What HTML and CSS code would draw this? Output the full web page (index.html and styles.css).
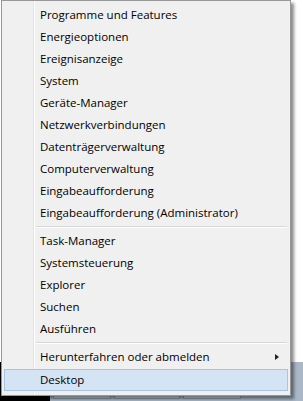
FILE: index.html
```html
<!DOCTYPE html>
<html lang="de">
<head>
    <meta charset="UTF-8">
    <title>Kontextmenü</title>
    <link rel="stylesheet" href="styles.css">
</head>
<body>
    <div class="taskbar">
        <div class="start"></div>
        <div class="task-btn"></div>
        <div class="task-btn wide"></div>
        <div class="task-btn"></div>
    </div>

    <div class="menu">
        <div class="item">Programme und Features</div>
        <div class="item">Energieoptionen</div>
        <div class="item">Ereignisanzeige</div>
        <div class="item">System</div>
        <div class="item">Geräte-Manager</div>
        <div class="item">Netzwerkverbindungen</div>
        <div class="item">Datenträgerverwaltung</div>
        <div class="item">Computerverwaltung</div>
        <div class="item">Eingabeaufforderung</div>
        <div class="item">Eingabeaufforderung (Administrator)</div>
        <div class="sep"></div>
        <div class="item">Task-Manager</div>
        <div class="item">Systemsteuerung</div>
        <div class="item">Explorer</div>
        <div class="item">Suchen</div>
        <div class="item">Ausführen</div>
        <div class="sep"></div>
        <div class="item sub">Herunterfahren oder abmelden <span class="arrow"></span></div>
        <div class="item active">Desktop</div>
    </div>
</body>
</html>
```

FILE: styles.css
```css
body {
    margin: 0;
    width: 303px;
    height: 401px;
    background: #ffffff;
    font-family: 'Open Sans', 'Noto Sans', sans-serif;
    font-size: 11.5px;
    color: #000;
    position: relative;
    overflow: hidden;
}

/* taskbar behind the menu */
.taskbar {
    position: absolute;
    left: 0;
    right: 0;
    top: 362px;
    bottom: 0;
    background: #a9b7c7;
    display: flex;
    align-items: flex-end;
    gap: 3px;
}

.start {
    width: 50px;
    height: 100%;
    background: #000;
}

.task-btn {
    width: 56px;
    height: 34px;
    margin-bottom: 2px;
    background: #c6d1dd;
    border: 1px solid #8e9db0;
}

.task-btn.wide {
    width: 64px;
}

.menu {
    position: relative;
    width: 285px;
    margin-left: 1px;
    padding: 3px 1px 4px 2px;
    background: #f0f0f0;
    border: 1px solid #979797;
    box-shadow: 3px 3px 3px rgba(0, 0, 0, 0.45);
    background-image: linear-gradient(to right, transparent 31px, #e2e3e3 31px, #e2e3e3 32px, #ffffff 32px, #ffffff 33px, transparent 33px);
}

.item {
    height: 22px;
    padding-left: 36px;
    padding-bottom: 1px;
    display: flex;
    align-items: center;
    box-sizing: border-box;
}

.sep {
    height: 6px;
    margin-left: 32px;
    margin-right: 2px;
    background: linear-gradient(to bottom, transparent 2px, #d7d7d7 2px, #d7d7d7 3px, #ffffff 3px, #ffffff 4px, transparent 4px);
}

.sub {
    justify-content: space-between;
    padding-right: 10px;
}

.arrow {
    width: 0;
    height: 0;
    border-top: 3px solid transparent;
    border-bottom: 3px solid transparent;
    border-left: 4px solid #222;
}

.item.active {
    background: #d4e4f5;
    border: 1px solid #a6c4e8;
    padding-left: 35px;
    margin-top: 1px;
    margin-right: 1px;
}
```
